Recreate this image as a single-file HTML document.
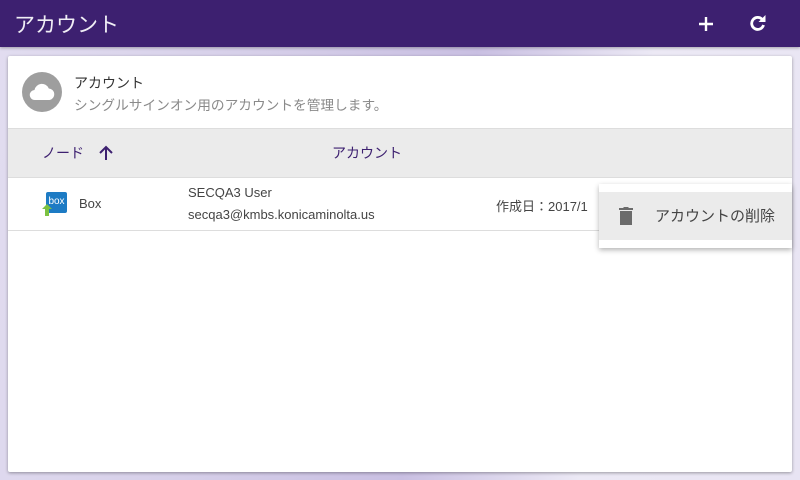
<!DOCTYPE html>
<html><head><meta charset="utf-8"><style>
*{margin:0;padding:0;box-sizing:border-box}
body{width:800px;height:480px;overflow:hidden;position:relative;font-family:"Liberation Sans","Noto Sans CJK JP",sans-serif;background:linear-gradient(100deg,#e2ddf0 0%,#d6cfe9 30%,#c9bfe2 55%,#ece9f5 75%,#e8e4f3 100%)}
.top{position:absolute;left:0;top:0;width:800px;height:47px;background:#3d2070;color:#fff;box-shadow:0 1px 3px rgba(0,0,0,.3)}
.top .t{position:absolute;left:14px;top:9px;font-size:21px;color:#f0eef5}
.card{position:absolute;left:8px;top:56px;width:784px;height:416px;background:#fff;border-radius:2px;box-shadow:0 1px 3px rgba(0,0,0,.35)}
.av{position:absolute;left:14px;top:16px;width:40px;height:40px;border-radius:50%;background:#9e9e9e}
.h1{position:absolute;left:66px;top:17px;font-size:14px;color:#333}
.h2{position:absolute;left:66px;top:38px;font-size:13.7px;color:#8a8a8a}
.th{position:absolute;left:0;top:72px;width:784px;height:50px;background:#ebebeb;border-top:1px solid #ddd;border-bottom:1px solid #ddd}
.th span{position:absolute;top:14px;font-size:14px;color:#3d2070}
.row{position:absolute;left:0;top:122px;width:784px;height:53px;border-bottom:1px solid #ddd;font-size:13px;color:#444}
.menu{position:absolute;left:599px;top:184px;width:193px;height:64px;background:#fff;box-shadow:0 2px 5px rgba(0,0,0,.3)}
.mi{position:absolute;left:0;top:8px;width:193px;height:48px;background:#ebebeb}
</style></head><body>
<div class="top"><div class="t">アカウント</div>
<svg style="position:absolute;left:696px;top:14px" width="20" height="20" viewBox="0 0 20 20"><path d="M10 3v14M3 10h14" stroke="#fff" stroke-width="2.4"/></svg>
<svg style="position:absolute;left:746px;top:11px" width="24" height="24" viewBox="0 0 24 24"><path fill="none" stroke="#fff" stroke-width="2.8" d="M17.5 14A6 6 0 1 1 16 8.2"/><path fill="#fff" d="M19.5 4v7h-7z"/></svg>
</div>
<div class="card">
<div class="av"><svg width="40" height="40" viewBox="0 0 40 40"><path fill="#fff" d="M13 28a5 5 0 0 1-.5-10 7.5 7.5 0 0 1 14.3-1.5A5.8 5.8 0 0 1 27.5 28z"/></svg></div>
<div class="h1">アカウント</div>
<div class="h2">シングルサインオン用のアカウントを管理します。</div>
<div class="th"><span style="left:34px">ノード</span>
<svg style="position:absolute;left:89px;top:15px" width="18" height="18" viewBox="0 0 18 18"><path d="M9 16V3M3 9l6-6 6 6" stroke="#3d2070" stroke-width="2" fill="none"/></svg>
<span style="left:324px">アカウント</span></div>
<div class="row">
<div style="position:absolute;left:38px;top:14px;width:21px;height:21px;background:#1d7bc4;border-radius:2px;color:#fff;font-size:10px;text-align:center;line-height:19px">box</div>
<svg style="position:absolute;left:34px;top:26px" width="10" height="12" viewBox="0 0 10 12"><path fill="#7cc242" d="M5 0l5 5H7v7H3V5H0z"/></svg>
<div style="position:absolute;left:71px;top:18px">Box</div>
<div style="position:absolute;left:180px;top:7px">SECQA3 User</div>
<div style="position:absolute;left:180px;top:29px">secqa3@kmbs.konicaminolta.us</div>
<div style="position:absolute;left:488px;top:18px">作成日：2017/1</div>
</div>
</div>
<div class="menu"><div class="mi">
<svg style="position:absolute;left:20px;top:14px" width="14" height="20" viewBox="0 0 14 20"><path fill="#6b6b6b" d="M0 2h4l1-1h4l1 1h4v2H0zM1 5h12v14H1z"/></svg>
<div style="position:absolute;left:56px;top:13px;font-size:15px;color:#444">アカウントの削除</div>
</div></div>
</body></html>
